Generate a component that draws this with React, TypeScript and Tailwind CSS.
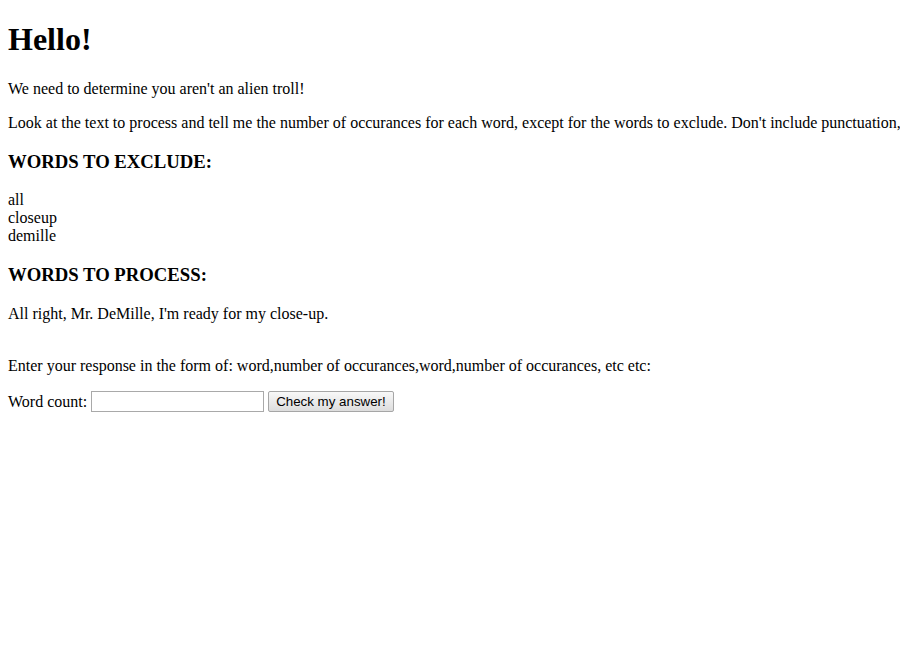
import React from "react";

export default function App() {
  return (
    <div
      className="w-[900px] h-[651px] overflow-hidden bg-white text-black text-[16px] leading-[normal] px-2 pt-[21.44px]"
      style={{ fontFamily: '"Liberation Serif", "Times New Roman", serif' }}
    >
      <div className="whitespace-nowrap">
        <h1 className="text-[32px] font-bold leading-[normal] mb-[21.44px]">Hello!</h1>
        <p className="mb-4">We need to determine you aren't an alien troll!</p>
        <p className="mb-[18.72px]">
          Look at the text to process and tell me the number of occurances for each word, except for the words to
          exclude. Don't include punctuation,
        </p>
        <h3 className="text-[18.72px] font-bold leading-[normal] mb-[18.72px]">WORDS TO EXCLUDE:</h3>
        <div>
          all
          <br />
          closeup
          <br />
          demille
        </div>
        <h3 className="text-[18.72px] font-bold leading-[normal] my-[18.72px]">WORDS TO PROCESS:</h3>
        <p className="mb-4">All right, Mr. DeMille, I'm ready for my close-up.</p>
        <div className="h-[18.4px]" />
        <p className="mb-4">
          Enter your response in the form of: word,number of occurances,word,number of occurances, etc etc:
        </p>
        <form className="flex items-center" onSubmit={(e) => e.preventDefault()}>
          <span>Word count:</span>
          <input
            type="text"
            className="ml-[4px] w-[173px] h-[21px] border border-[#a9a9a9] bg-white px-[2px] text-[13.33px] outline-none"
          />
          <button
            type="submit"
            className="ml-[4px] h-[21px] px-[7px] border border-[#a6a6a6] rounded-[2px] bg-gradient-to-b from-[#f8f8f8] to-[#dddddd] text-[13.33px] text-black leading-none"
            style={{ fontFamily: '"Liberation Sans", Arial, sans-serif' }}
          >
            Check my answer!
          </button>
        </form>
      </div>
    </div>
  );
}
